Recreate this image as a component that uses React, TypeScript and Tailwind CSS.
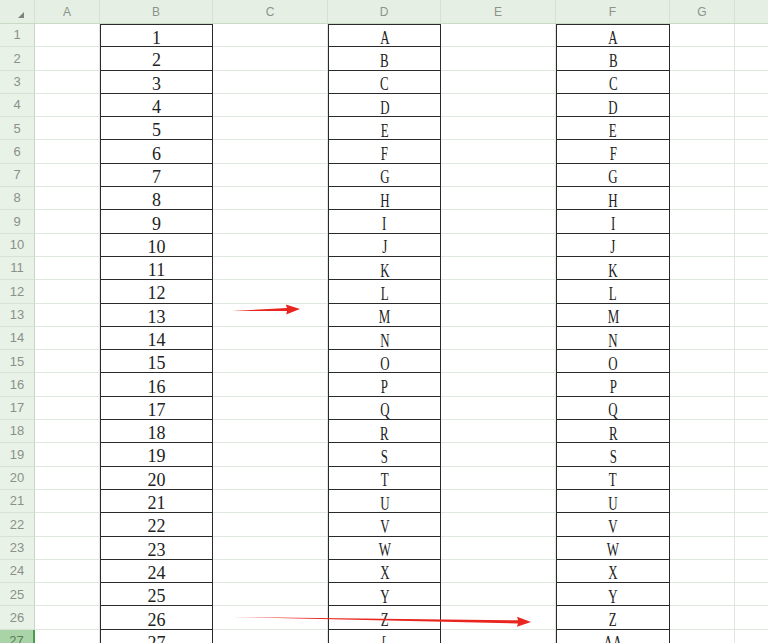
import React from 'react';

const cols = [
  { name: 'A', w: 'w-[65px]' },
  { name: 'B', w: 'w-[113px]' },
  { name: 'C', w: 'w-[115px]' },
  { name: 'D', w: 'w-[113px]' },
  { name: 'E', w: 'w-[115px]' },
  { name: 'F', w: 'w-[114px]' },
  { name: 'G', w: 'w-[65px]' },
  { name: 'H', w: 'w-[80px]' },
];

const letters = 'ABCDEFGHIJKLMNOPQRSTUVWXYZ'.split('');

function cellValue(col: string, r: number) {
  if (col === 'B') return String(r);
  if (col === 'D') return r <= 26 ? letters[r - 1] : '[';
  if (col === 'F') return r <= 26 ? letters[r - 1] : 'AA';
  return '';
}

const boxed = ['B', 'D', 'F'];

function Arrow({ x1, y1, x2, y2 }: { x1: number; y1: number; x2: number; y2: number }) {
  const len = Math.hypot(x2 - x1, y2 - y1);
  const ang = (Math.atan2(y2 - y1, x2 - x1) * 180) / Math.PI;
  return (
    <svg
      className="absolute pointer-events-none"
      style={{ left: x1, top: y1 - 8, width: len + 2, height: 16, transform: `rotate(${ang}deg)`, transformOrigin: '0 8px' }}
      viewBox={`0 0 ${len + 2} 16`}
    >
      <polygon points={`0,8 ${len - 13},6.5 ${len - 14},3 ${len},8 ${len - 14},13 ${len - 13},9.7`} fill="#e8261f" />
    </svg>
  );
}

export default function App() {
  const rows = Array.from({ length: 27 }, (_, i) => i + 1);
  return (
    <div className="relative w-[768px] h-[643px] overflow-hidden bg-white" style={{ fontFamily: '"Liberation Sans", Arial, sans-serif' }}>
      {/* column header */}
      <div className="flex h-[24px] bg-[#e5efe3] border-b border-[#c9dbc7]">
        <div className="w-[35px] shrink-0 relative border-r border-[#d3e2d1]">
          <div className="absolute left-[18px] top-[12px] w-0 h-0 border-l-[6px] border-l-transparent border-b-[6px] border-b-[#7d827d]" />
        </div>
        {cols.map((c) => (
          <div key={c.name} className={`${c.w} shrink-0 flex items-center justify-center text-[12px] text-[#8d938d] border-r border-[#d3e2d1]`}>
            {c.name}
          </div>
        ))}
      </div>
      {rows.map((r) => (
        <div key={r} className="flex h-[23.3px]">
          <div
            className={`w-[35px] shrink-0 flex items-center justify-center text-[13px] border-b ${
              r === 27 ? 'bg-[#a9d4a7] text-[#5e7b5e] border-r-2 border-r-[#4e9a4c] border-b-[#a9d4a7]' : 'bg-[#e9f2e7] text-[#8b908b] border-r border-r-[#c5d8c3] border-b-[#d6e3d4]'
            }`}
          >
            {r}
          </div>
          {cols.map((c) => {
            const isBox = boxed.includes(c.name);
            return (
              <div
                key={c.name}
                className={`${c.w} shrink-0 flex items-center justify-center ${
                  isBox
                    ? 'border-x-[1.5px] border-x-[#2a2a2a] border-b border-b-[#2a2a2a] text-[#222]'
                    : 'border-r border-r-[#dfe8de] border-b border-b-[#dfe8de]'
                } ${r === 1 && isBox ? 'border-t border-t-[#2a2a2a]' : ''}`}
                style={{ fontFamily: '"Liberation Serif", "Times New Roman", serif' }}
              >
                <span
                  className={
                    c.name === 'B'
                      ? 'text-[18px] leading-none translate-y-[2px]'
                      : 'text-[19px] leading-none inline-block scale-x-[0.68] translate-y-[2px]'
                  }
                >
                  {cellValue(c.name, r)}
                </span>
              </div>
            );
          })}
        </div>
      ))}
      <Arrow x1={232} y1={311} x2={300} y2={309} />
      <Arrow x1={232} y1={617} x2={531} y2={622} />
    </div>
  );
}
